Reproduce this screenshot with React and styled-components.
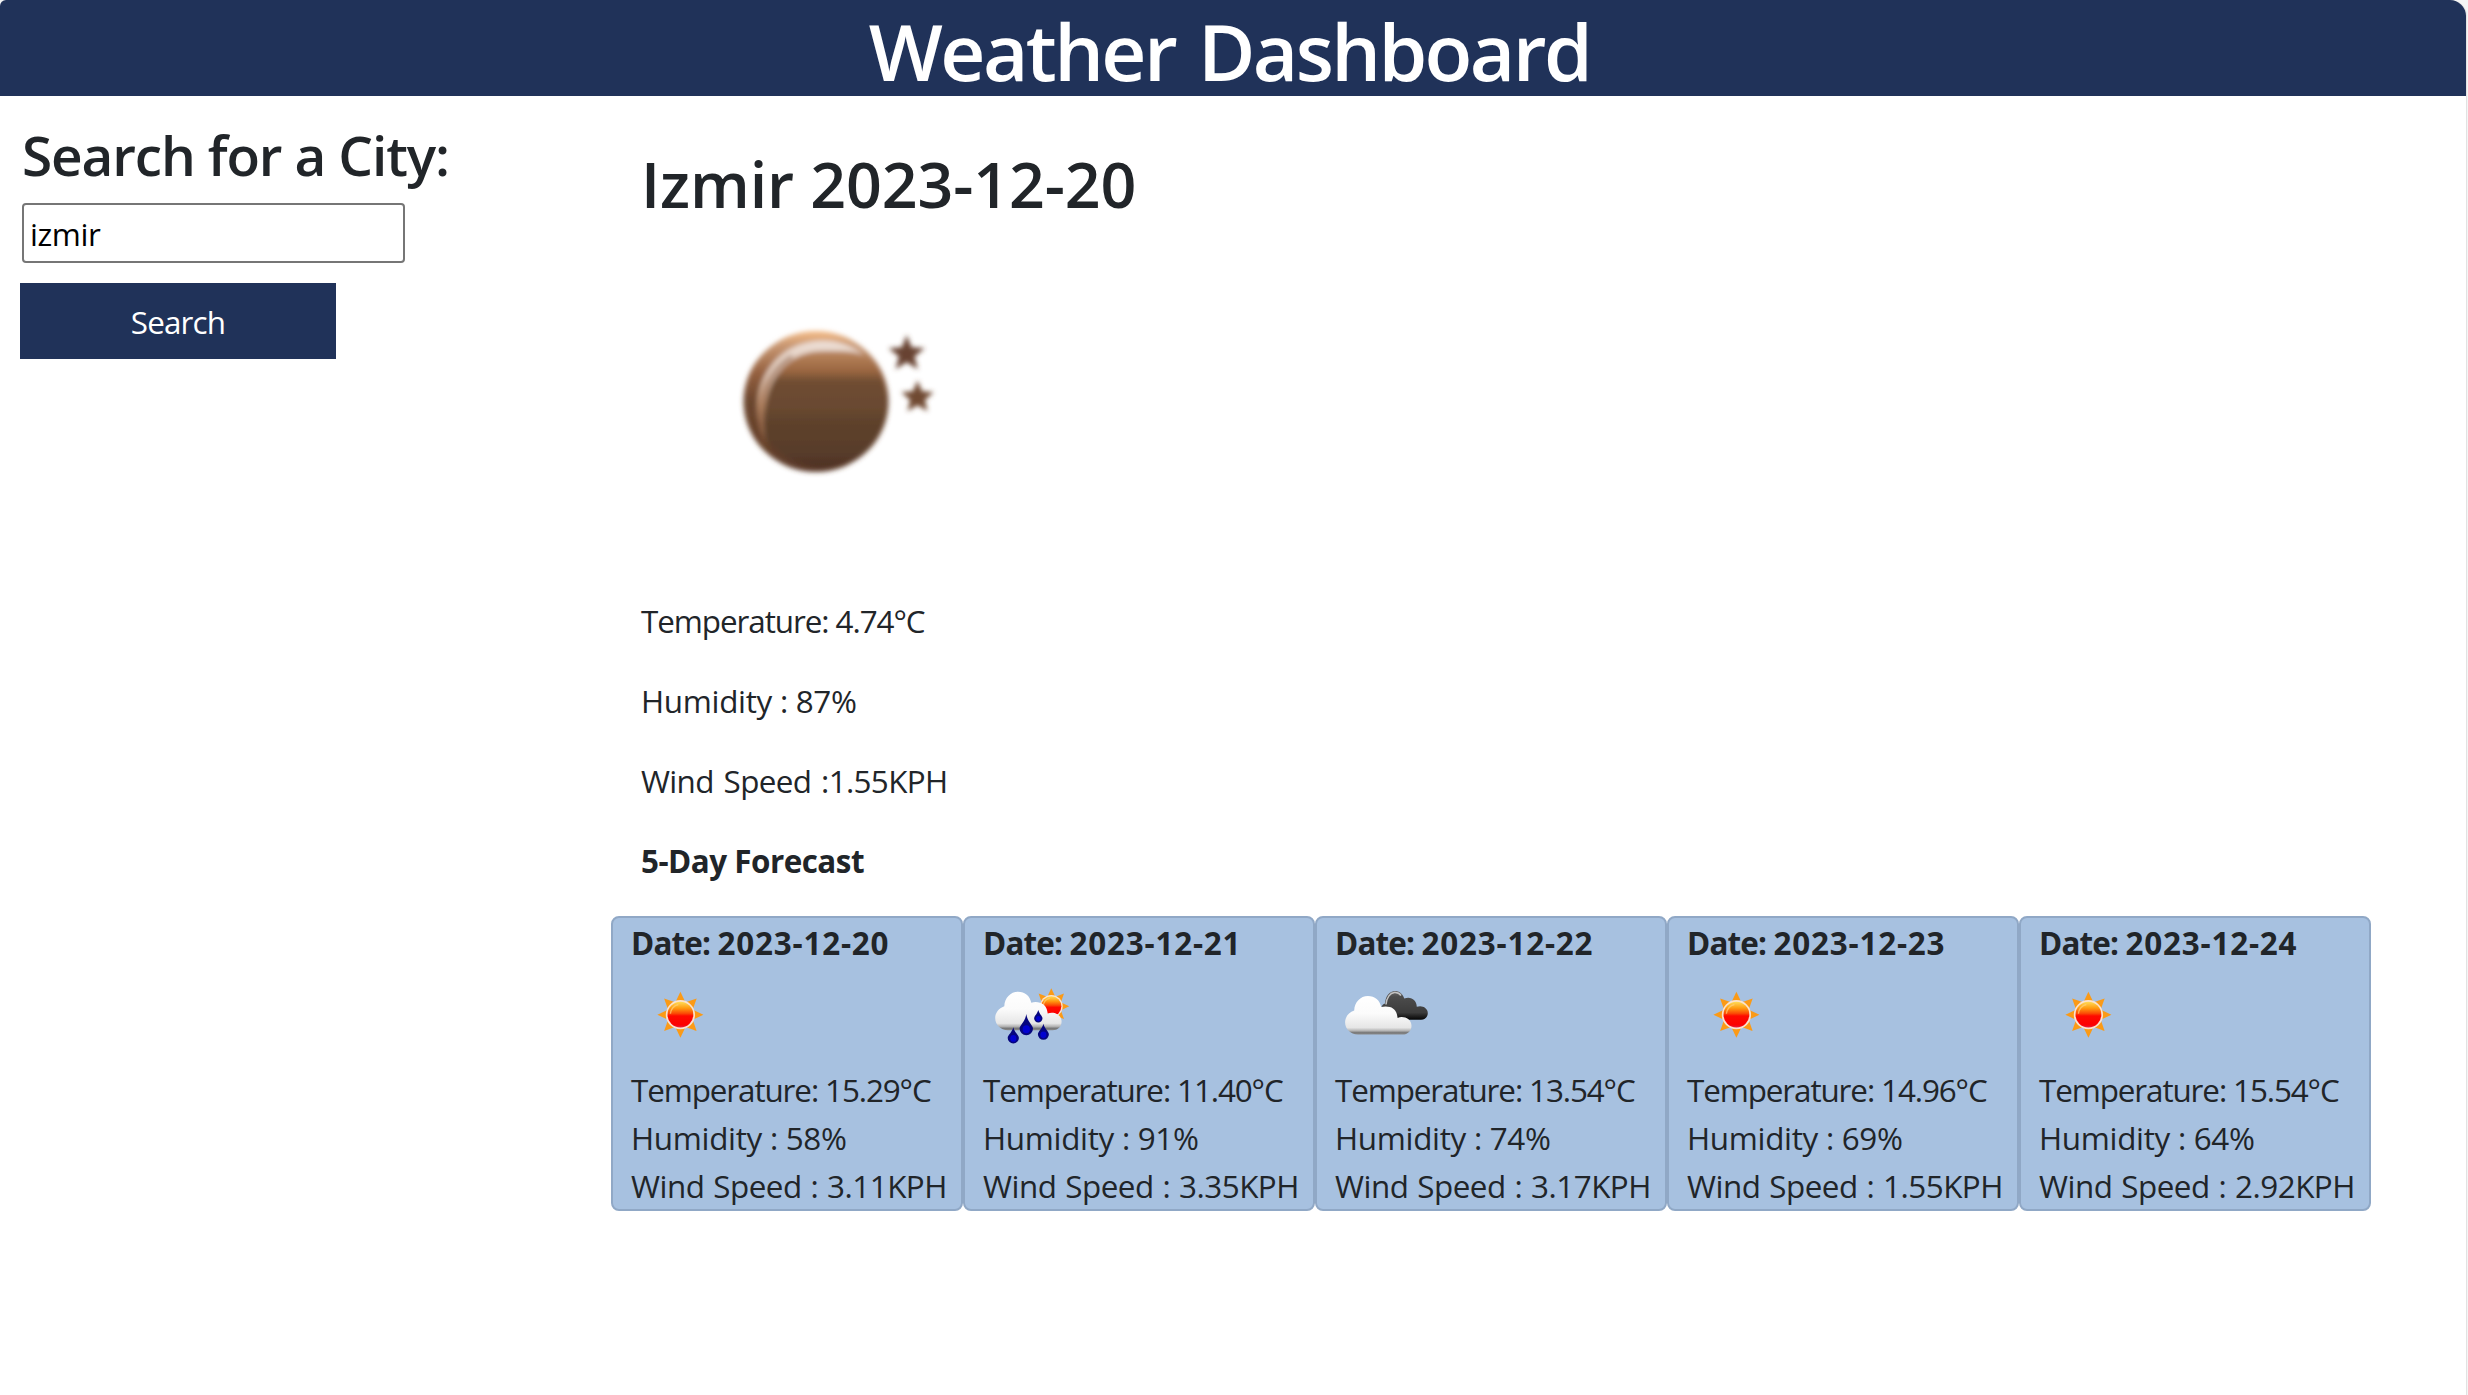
import React, { useState } from "react";
import styled, { createGlobalStyle } from "styled-components";

const GlobalStyle = createGlobalStyle`
  * { box-sizing: border-box; }
  body {
    margin: 0;
    background: #f5f5f5;
    color: #212529;
    font-family: "Open Sans", "Noto Sans", sans-serif;
    font-size: 31.4px;
    line-height: 48px;
  }
`;

const Page = styled.div`
  width: 2467px;
  height: 1395px;
  background: #fff;
  border-right: 1px solid #e2e2e2;
  border-radius: 6px 16px 0 0;
`;

const Header = styled.header`
  height: 96px;
  padding: 5px 7px 0 0;
  background: #203259;
  border-radius: 6px 16px 0 0;
`;

const Title = styled.h1`
  margin: 0;
  color: #fff;
  font-size: 78.4px;
  font-weight: 600;
  line-height: 91px;
  letter-spacing: -2.6px;
  word-spacing: 5px;
  text-align: center;
`;

const Columns = styled.div`
  display: flex;
`;

const Sidebar = styled.aside`
  width: 611px;
  padding: 25px 0 0 22px;
`;

const SearchTitle = styled.h2`
  margin: 0 0 15px;
  font-size: 54.9px;
  font-weight: 600;
  line-height: 67px;
  letter-spacing: -1.14px;
  white-space: nowrap;
`;

const SearchInput = styled.input`
  display: block;
  width: 383px;
  height: 60px;
  padding: 0 5px 0 6px;
  border: 2px solid #767676;
  border-radius: 4px;
  color: #000;
  font: inherit;
  letter-spacing: -0.4px;
  outline: none;
`;

const SearchButton = styled.button`
  display: block;
  width: 316px;
  height: 76px;
  margin: 20px 0 0 -2px;
  padding: 2px 0 0;
  border: 0;
  background: #203259;
  color: #fff;
  font: inherit;
  letter-spacing: -0.83px;
`;

const Main = styled.main`
  width: 1760px;
  padding-top: 49px;
`;

const Current = styled.section`
  display: flex;
  flex-direction: column;
  padding-left: 30px;
`;

const CityName = styled.h2`
  margin: 0;
  font-size: 62.7px;
  font-weight: 600;
  line-height: 77px;
  letter-spacing: -0.1px;
`;

const CurrentIcon = styled.svg`
  display: block;
  width: 400px;
  height: 375px;
`;

const Line = styled.p`
  margin: 0 0 ${(p) => p.$gap || 0}px;
  font-weight: ${(p) => (p.$bold ? 700 : 400)};
  letter-spacing: ${(p) => p.$spacing}px;
  word-spacing: ${(p) => p.$words || 0}px;
  white-space: nowrap;
`;

const DateLabel = styled.span`
  letter-spacing: -0.82px;
`;

const Forecast = styled.section`
  display: flex;
  margin-top: -1px;
`;

const Card = styled.article`
  flex: 1;
  height: 295px;
  padding: 1px 0 0 18px;
  background: #a7c1e0;
  border: 2px solid #90a8c6;
  border-radius: 8px;
`;

const CardIcon = styled.svg`
  display: block;
  width: 100px;
  height: 99px;
`;

function star(cx, cy, outer, inner, points) {
  const out = [];
  for (let i = 0; i < points * 2; i++) {
    const r = i % 2 ? inner : outer;
    const a = (Math.PI * i) / points - Math.PI / 2;
    out.push(`${(cx + r * Math.cos(a)).toFixed(2)},${(cy + r * Math.sin(a)).toFixed(2)}`);
  }
  return out.join(" ");
}

function Sun({ cx, cy, k = 1, id }) {
  return (
    <g transform={`translate(${cx} ${cy}) scale(${k})`}>
      <defs>
        <linearGradient id={id} x1="0" y1="0" x2="0" y2="1">
          <stop offset="0" stopColor="#ffdc58" />
          <stop offset="0.25" stopColor="#ff9a10" />
          <stop offset="0.45" stopColor="#fb4a05" />
          <stop offset="0.55" stopColor="#fe0a00" />
          <stop offset="0.9" stopColor="#fc0000" />
          <stop offset="1" stopColor="#e0204a" />
        </linearGradient>
      </defs>
      {[0, 45, 90, 135, 180, 225, 270, 315].map((a) => (
        <path
          key={a}
          d="M0-23L5-12.5H-5Z"
          fill="#fb9a16"
          transform={`rotate(${a})`}
        />
      ))}
      <circle r="14.6" fill="#fbe3cf" />
      <circle r="12.9" fill={`url(#${id})`} />
      <path d="M-10-1A10 10 0 0 1-2-10.2" fill="none" stroke="#ffd27a" strokeWidth="1.4" opacity=".7" />
    </g>
  );
}

const CLOUD =
  "M25 63.3C17.500 63.300 12.200 57.500 12.200 51C12.200 46 15.500 41.500 21.300 39.300C21.500 31 27.500 24.700 35 24.700C42 24.700 47 29 48.300 35.800C51 34.900 54 34.900 57 35.700C61.500 37 64.300 41 64.700 46.600C70.500 44 78.600 47.500 78.600 54.500C78.600 59.500 75 63.300 69.500 63.300Z";

function CloudShape({ id, x = 0, y = 0 }) {
  return (
    <g transform={`translate(${x} ${y})`}>
      <defs>
        <linearGradient id={id} x1="0" y1="0" x2="0" y2="1">
          <stop offset="0" stopColor="#fff" />
          <stop offset="0.45" stopColor="#fbfbfb" />
          <stop offset="0.82" stopColor="#e6e6e6" />
          <stop offset="0.9" stopColor="#b4b4b4" />
          <stop offset="0.95" stopColor="#777" />
          <stop offset="1" stopColor="#8b8b8b" />
        </linearGradient>
      </defs>
      <path d={CLOUD} fill={`url(#${id})`} />
    </g>
  );
}

function Drop({ x, top, bottom, r }) {
  const cy = bottom - r;
  return (
    <g>
      <path
        d={`M${x} ${top}C${x + 1} ${cy - r} ${x + r} ${cy - r * 0.5} ${x + r} ${cy}A${r} ${r} 0 0 1 ${x - r} ${cy}C${x - r} ${cy - r * 0.5} ${x - 1} ${cy - r} ${x} ${top}Z`}
        fill="#06067e"
      />
      <ellipse cx={x} cy={cy + r * 0.1} rx={r * 0.55} ry={r * 0.6} fill="#0202d0" />
    </g>
  );
}

function ForecastIcon({ kind, id }) {
  if (kind === "rain") {
    return (
      <CardIcon viewBox="0 0 100 99">
        <Sun cx={68.3} cy={39.3} k={0.78} id={`${id}-sun`} />
        <CloudShape id={`${id}-cloud`} />
        <Drop x={43.3} top={47} bottom={68.2} r={6.7} />
        <Drop x={55.3} top={43} bottom={55.4} r={4.2} />
        <Drop x={30.3} top={60.3} bottom={76.5} r={5.6} />
        <Drop x={60.4} top={56.8} bottom={72.8} r={5.5} />
      </CardIcon>
    );
  }
  if (kind === "clouds") {
    return (
      <CardIcon viewBox="0 0 100 99">
        <defs>
          <linearGradient id={`${id}-dark`} x1="0" y1="0" x2="0" y2="1">
            <stop offset="0" stopColor="#6a6a6a" />
            <stop offset="0.2" stopColor="#4c4c4c" />
            <stop offset="0.75" stopColor="#3c3c3c" />
            <stop offset="1" stopColor="#050505" />
          </linearGradient>
        </defs>
        <path
          d="M46.500 40C47.500 37.500 48.500 37 50 36.500C50.500 29 54.500 24 60 24C64.500 24 67.500 26.500 69.300 31.500C76 29 81.500 33 81.800 39.800C87 37.800 92.800 41 92.800 46C92.800 50 90 52.700 86 52.700H60Z"
          fill={`url(#${id}-dark)`}
        />
        <path d="M51 37.500C51.500 30.500 55 26 59.500 25.600C62.500 25.400 64.500 26.500 66 28.500" fill="none" stroke="#c4c4c4" strokeWidth="1.500" />
        <CloudShape id={`${id}-cloud`} x={-2.1} y={4.3} />
      </CardIcon>
    );
  }
  return (
    <CardIcon viewBox="0 0 100 99">
      <Sun cx={49.4} cy={47.7} id={`${id}-sun`} />
    </CardIcon>
  );
}

function NightIcon() {
  return (
    <CurrentIcon viewBox="641 222 400 375">
      <defs>
        <filter id="soft" x="-10%" y="-10%" width="120%" height="120%">
          <feGaussianBlur stdDeviation="2.4" />
        </filter>
        <linearGradient id="moonRim" x1="0" y1="0" x2="0" y2="1">
          <stop offset="0" stopColor="#f6bd88" />
          <stop offset="0.1" stopColor="#c99873" />
          <stop offset="0.3" stopColor="#94603f" />
          <stop offset="0.5" stopColor="#6b462f" />
          <stop offset="0.8" stopColor="#664028" />
          <stop offset="1" stopColor="#5a3a2a" />
        </linearGradient>
        <linearGradient id="moonBody" gradientUnits="userSpaceOnUse" x1="0" y1="346" x2="0" y2="472">
          <stop offset="0" stopColor="#c29270" />
          <stop offset="0.08" stopColor="#b37f57" />
          <stop offset="0.2" stopColor="#9a6640" />
          <stop offset="0.28" stopColor="#6f4d33" />
          <stop offset="0.48" stopColor="#6a4930" />
          <stop offset="0.6" stopColor="#5e422c" />
          <stop offset="0.85" stopColor="#583c2c" />
          <stop offset="0.97" stopColor="#4c2f20" />
        </linearGradient>
        <linearGradient id="moonShine" gradientUnits="userSpaceOnUse" x1="0" y1="338" x2="0" y2="440">
          <stop offset="0" stopColor="#efe2da" />
          <stop offset="0.35" stopColor="#dcc4b4" />
          <stop offset="0.65" stopColor="#c1926f" />
          <stop offset="1" stopColor="#7b5237" />
        </linearGradient>
      </defs>
      <g filter="url(#soft)">
        <ellipse cx="816" cy="401.500" rx="72.500" ry="70.5" fill="url(#moonRim)" />
        <path
          d="M764 442C751 408 757 376 780 356C802 337 840 335 864 355C850 349 814 349 792 364C768 380 760 410 767 445Z"
          fill="url(#moonShine)"
        />
        <path
          d="M762 428C758 396 769 371 792 356"
          fill="none"
          stroke="#8b5c40"
          strokeWidth="3"
          opacity=".75"
        />
        <path
          d="M766 440C758 395 778 351 824 351C845 351 872 353 877 370C891 392 888 424 872 444C850 474 796 477 766 440Z"
          fill="url(#moonBody)"
        />
        <polygon points={star(906.7, 354, 19, 8.2, 5)} fill="#684330" />
        <polygon points={star(917.5, 397.5, 17, 7.8, 5)} fill="#704832" />
      </g>
    </CurrentIcon>
  );
}

const days = [
  { date: "2023-12-20", kind: "sun", temp: "15.29", humidity: 58, wind: "3.11" },
  { date: "2023-12-21", kind: "rain", temp: "11.40", humidity: 91, wind: "3.35" },
  { date: "2023-12-22", kind: "clouds", temp: "13.54", humidity: 74, wind: "3.17" },
  { date: "2023-12-23", kind: "sun", temp: "14.96", humidity: 69, wind: "1.55" },
  { date: "2023-12-24", kind: "sun", temp: "15.54", humidity: 64, wind: "2.92" },
];

export default function App() {
  const [city, setCity] = useState("izmir");
  return (
    <>
      <GlobalStyle />
      <Page>
        <Header>
          <Title>Weather Dashboard</Title>
        </Header>
        <Columns>
          <Sidebar>
            <SearchTitle>Search for a City:</SearchTitle>
            <SearchInput value={city} onChange={(e) => setCity(e.target.value)} />
            <SearchButton type="button">Search</SearchButton>
          </Sidebar>
          <Main>
            <Current>
              <CityName>Izmir 2023-12-20</CityName>
              <NightIcon />
              <Line $spacing={-1.06} $gap={32}>Temperature: 4.74°C</Line>
              <Line $spacing={-0.3} $gap={32}>Humidity : 87%</Line>
              <Line $spacing={-0.66} $words={2.4} $gap={32}>Wind Speed :1.55KPH</Line>
              <Line $spacing={-0.5} $gap={32} $bold>5-Day Forecast</Line>
            </Current>
            <Forecast>
              {days.map((d) => (
                <Card key={d.date}>
                  <Line $spacing={0.8} $bold>
                    <DateLabel>Date: </DateLabel>
                    {d.date}
                  </Line>
                  <ForecastIcon kind={d.kind} id={`d${d.date}`} />
                  <Line $spacing={-1.1}>{`Temperature: ${d.temp}°C`}</Line>
                  <Line $spacing={-0.3}>{`Humidity : ${d.humidity}%`}</Line>
                  <Line $spacing={-0.5} $words={1.2}>{`Wind Speed : ${d.wind}KPH`}</Line>
                </Card>
              ))}
            </Forecast>
          </Main>
        </Columns>
      </Page>
    </>
  );
}
